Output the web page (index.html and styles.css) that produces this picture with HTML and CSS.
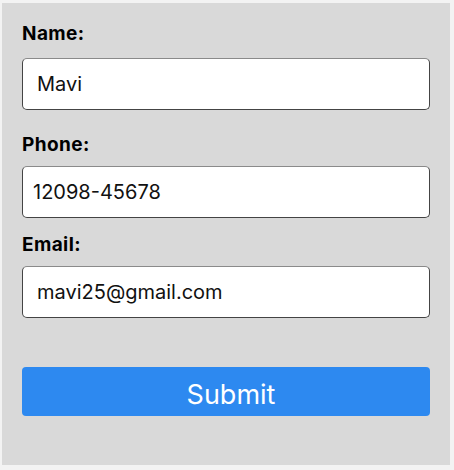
FILE: index.html
```html
<!DOCTYPE html>
<html lang="en">
<head>
<meta charset="utf-8">
<title>Form</title>
<link rel="stylesheet" href="styles.css">
</head>
<body>
<form class="card">
  <div class="field field-name">
    <label class="label" for="name">Name:</label>
    <input class="input" id="name" type="text" value="Mavi">
  </div>
  <div class="field field-phone">
    <label class="label" for="phone">Phone:</label>
    <input class="input input-tel" id="phone" type="tel" value="12098-45678">
  </div>
  <div class="field field-email">
    <label class="label" for="email">Email:</label>
    <input class="input" id="email" type="email" value="mavi25@gmail.com">
  </div>
  <button class="submit" type="button">Submit</button>
</form>
</body>
</html>
```

FILE: styles.css
```css
* { box-sizing: border-box; }
html, body { margin: 0; padding: 0; }
body {
  background: #f3f3f3;
  font-family: Inter, "DejaVu Sans", sans-serif;
  width: 454px;
  height: 470px;
  padding: 3px 4px 5px 2px;
}
.card {
  background: #d9d9d9;
  height: 462px;
  padding: 20px 20px 0 20px;
  display: flex;
  flex-direction: column;
}
.field { display: flex; flex-direction: column; }
.label {
  display: block;
  font-size: 19px;
  line-height: 22px;
  font-weight: 700;
  letter-spacing: 0.4px;
  color: #000;
}
.field-name .label { margin-bottom: 13px; }
.field-phone { margin-top: 24px; }
.field-phone .label { margin-bottom: 10px; }
.field-email { margin-top: 16px; }
.field-email .label { margin-bottom: 10px; }
.input {
  width: 100%;
  height: 52px;
  border: 1px solid #444;
  border-top-color: #8a8a8a;
  border-radius: 5px;
  background: #fff;
  font-family: inherit;
  font-size: 20px;
  color: #111;
  padding: 0 14px;
  outline: none;
}
.input-tel { padding-left: 10px; }
.submit {
  margin-top: 49px;
  height: 49px;
  width: 100%;
  border: 0;
  border-radius: 4px;
  background: #2d89f0;
  color: #fff;
  font-family: inherit;
  font-size: 27px;
  font-weight: 400;
  padding: 5px 0 0 10px;
}
```
